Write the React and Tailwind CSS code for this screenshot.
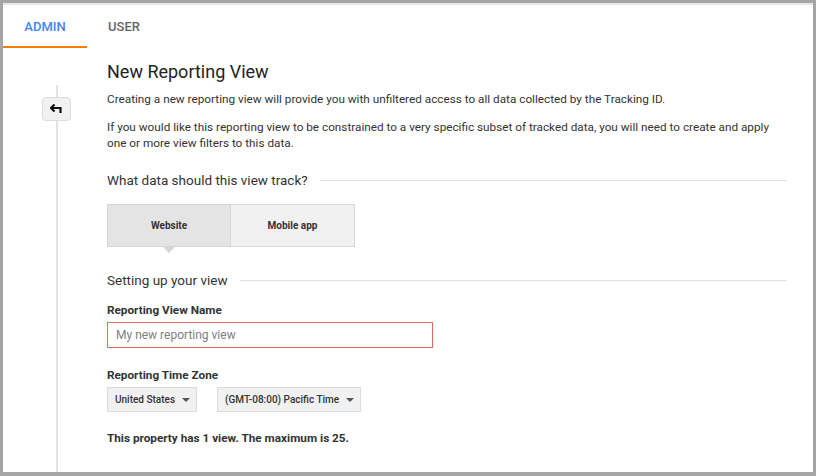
const Caret = () => (
  <svg width="8" height="4" viewBox="0 0 8 4" className="shrink-0">
    <path d="M0 0h8L4 4z" fill="#555" />
  </svg>
);

const SectionHeading = ({ children }) => (
  <div className="flex items-center gap-3 h-[20px]">
    <span className="text-[13.5px] text-[#333] whitespace-nowrap">{children}</span>
    <div className="h-px flex-1 bg-[#e0e0e0]" />
  </div>
);

export default function App() {
  return (
    <div className="w-[816px] h-[476px] bg-[#a5a5a5] pt-[3px] pl-[3px] pr-[3px] pb-[4px] overflow-hidden" style={{ fontFamily: 'Roboto, "Liberation Sans", sans-serif' }}>
      <div className="w-[810px] h-[469px] bg-white border-t-2 border-[#e8e8e8] flex flex-col">
        <div className="flex h-[43px] text-[13px] font-medium">
          <div className="w-[84px] flex items-center justify-center pt-[2px] text-[#4285f4] border-b-2 border-[#f57c00]">ADMIN</div>
          <div className="w-[74px] flex items-center justify-center text-[#666]">USER</div>
        </div>
        <div className="flex flex-1">
          <div className="w-[104px] relative">
            <div className="absolute left-[53px] top-[37px] bottom-0 w-[2px] bg-[#e3e3e3]" />
            <div className="absolute left-[39px] top-[49px] w-[29px] h-[24px] bg-[#f1f1f1] border border-[#dcdcdc] rounded-sm flex items-center justify-center">
              <svg width="13" height="10" viewBox="0 0 13 10">
                <path d="M4.5 0.5L1 4l3.5 3.5" fill="none" stroke="#111" strokeWidth="2.2" />
                <path d="M1.5 4H10.5v5" fill="none" stroke="#111" strokeWidth="2.2" />
              </svg>
            </div>
          </div>
          <div className="flex-1 pr-[26px] text-[#333]">
            <h1 className="text-[18px] text-[#222] mt-[12px] leading-[24px]">New Reporting View</h1>
            <p className="text-[11.75px] leading-[16px] mt-[7px]">Creating a new reporting view will provide you with unfiltered access to all data collected by the Tracking ID.</p>
            <p className="text-[11.75px] leading-[16px] mt-[12px]">If you would like this reporting view to be constrained to a very specific subset of tracked data, you will need to create and apply one or more view filters to this data.</p>
            <div className="mt-[19px]"><SectionHeading>What data should this view track?</SectionHeading></div>
            <div className="flex mt-[14px] text-[10px] font-bold text-[#333]">
              <div className="relative w-[124px] h-[43px] bg-[#e4e4e4] border border-[#d6d6d6] flex items-center justify-center">
                Website
                <div className="absolute left-1/2 -translate-x-1/2 -bottom-[7px] w-0 h-0 border-l-[7px] border-r-[7px] border-t-[7px] border-l-transparent border-r-transparent border-t-[#d6d6d6]" />
              </div>
              <div className="w-[124px] h-[43px] bg-[#f1f1f1] border border-l-0 border-[#d9d9d9] flex items-center justify-center">Mobile app</div>
            </div>
            <div className="mt-[23px]"><SectionHeading>Setting up your view</SectionHeading></div>
            <div className="text-[11.75px] font-bold mt-[12px] leading-[16px]">Reporting View Name</div>
            <div className="mt-[4px] w-[326px] h-[26px] border border-[#e8675c] flex items-center px-[8px] text-[12px] text-[#808080]">My new reporting view</div>
            <div className="text-[11.75px] font-bold mt-[19px] leading-[16px]">Reporting Time Zone</div>
            <div className="flex gap-[20px] mt-[4px] text-[10px] font-medium text-[#333] whitespace-nowrap">
              <div className="h-[25px] bg-[#f1f1f1] border border-[#dcdcdc] flex items-center gap-[7px] pl-[7px] pr-[6px]">
                <span>United States</span><Caret />
              </div>
              <div className="h-[25px] bg-[#f1f1f1] border border-[#dcdcdc] flex items-center gap-[7px] pl-[7px] pr-[6px]">
                <span>(GMT-08:00) Pacific Time</span><Caret />
              </div>
            </div>
            <div className="text-[11.75px] font-bold mt-[18px] leading-[16px]">This property has 1 view. The maximum is 25.</div>
          </div>
        </div>
      </div>
    </div>
  );
}
